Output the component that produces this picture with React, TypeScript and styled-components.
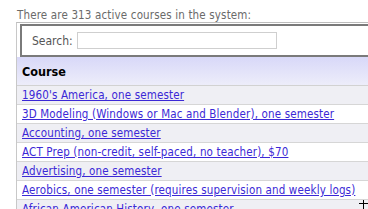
import React from "react";
import styled, { createGlobalStyle } from "styled-components";

const Global = createGlobalStyle`
  html, body { margin: 0; padding: 0; background: #fff; overflow: hidden; }
  body { font-family: "DejaVu Sans Condensed", "DejaVu Sans", sans-serif; }
`;

const Page = styled.div`
  padding: 9px 0 0 16px;
  width: 420px;
  height: 209px;
  position: relative;
  box-sizing: border-box;
`;

const Intro = styled.div`
  margin-left: 1px;
  font-size: 11.5px;
  letter-spacing: 0.15px;
  line-height: 13px;
  color: #6a6a6a;
`;

const Panel = styled.div`
  border-left: 1px solid #c8c8c8;
  border-top: 1px solid #bdbdbd;
`;

const SearchBar = styled.div`
  margin: 1px 0 0 3px;
  height: 29px;
  border: 2px solid #7a7a7a;
  border-right: none;
  display: flex;
  align-items: center;
  gap: 4px;
  padding-left: 10px;
  font-size: 12px;
  color: #555;
`;

const SearchInput = styled.input`
  width: 200px;
  height: 17px;
  box-sizing: border-box;
  border: 1px solid #cfcfcf;
  padding: 0;
  margin: 0;
  outline: none;
`;

const Header = styled.div`
  height: 28px;
  background: linear-gradient(#d8d8f8, #ededfa);
  border-bottom: 1px solid #d2d2d2;
  display: flex;
  align-items: center;
  padding-left: 5px;
  font-weight: bold;
  font-size: 12.5px;
  color: #000;
`;

const Row = styled.div<{ $alt: boolean }>`
  height: 18px;
  border-bottom: 1px solid #d6d6d6;
  background: ${(p) => (p.$alt ? "#efeff4" : "#ffffff")};
  display: flex;
  align-items: center;
  padding-left: 5px;
  font-size: 11.5px;
  letter-spacing: 0.15px;
  white-space: nowrap;
`;

const CourseLink = styled.a`
  color: #3b28d6;
  text-decoration: underline;
`;

const Cursor = styled.div`
  position: absolute;
  left: 359px;
  top: 198px;
  width: 10px;
  height: 11px;
  &::before {
    content: "";
    position: absolute;
    left: 0;
    top: 5px;
    width: 10px;
    height: 1px;
    background: #000;
  }
  &::after {
    content: "";
    position: absolute;
    left: 4px;
    top: 2px;
    width: 1px;
    height: 9px;
    background: #000;
  }
`;

const courses = [
  "1960's America, one semester",
  "3D Modeling (Windows or Mac and Blender), one semester",
  "Accounting, one semester",
  "ACT Prep (non-credit, self-paced, no teacher), $70",
  "Advertising, one semester",
  "Aerobics, one semester (requires supervision and weekly logs)",
  "African American History, one semester",
];

export default function App() {
  return (
    <>
      <Global />
      <Page>
        <Intro>There are 313 active courses in the system:</Intro>
        <Panel>
          <SearchBar>
            <span>Search:</span>
            <SearchInput type="text" />
          </SearchBar>
          <Header>Course</Header>
          {courses.map((c, i) => (
            <Row key={c} $alt={i % 2 === 0}>
              <CourseLink href="#">{c}</CourseLink>
            </Row>
          ))}
        </Panel>
        <Cursor />
      </Page>
    </>
  );
}
